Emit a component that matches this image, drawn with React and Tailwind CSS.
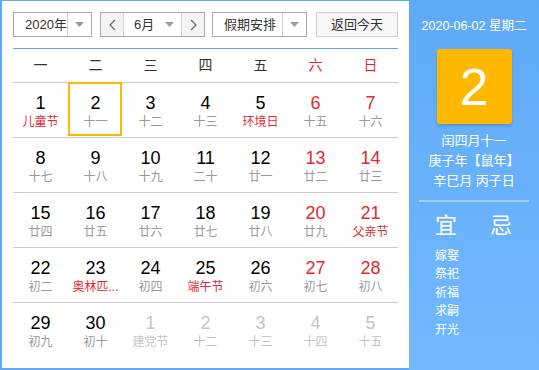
import React from "react";

const FONT = { fontFamily: '"Liberation Sans", "Noto Sans CJK SC", sans-serif' };

const Tri = () => (
  <svg width="9" height="5" viewBox="0 0 9 5"><path d="M0 0 H9 L4.5 5 Z" fill="#9a9a9a" /></svg>
);
const Chev = ({ dir }) => (
  <svg width="7" height="12" viewBox="0 0 7 12">
    <path d={dir === "l" ? "M6 1 L1 6 L6 11" : "M1 1 L6 6 L1 11"} fill="none" stroke="#666" strokeWidth="1.2" />
  </svg>
);

const rows = [
  [["1", "儿童节", "f"], ["2", "十一", "sel"], ["3", "十二"], ["4", "十三"], ["5", "环境日", "f"], ["6", "十五", "w"], ["7", "十六", "w"]],
  [["8", "十七"], ["9", "十八"], ["10", "十九"], ["11", "二十"], ["12", "廿一"], ["13", "廿二", "w"], ["14", "廿三", "w"]],
  [["15", "廿四"], ["16", "廿五"], ["17", "廿六"], ["18", "廿七"], ["19", "廿八"], ["20", "廿九", "w"], ["21", "父亲节", "wf"]],
  [["22", "初二"], ["23", "奥林匹...", "f"], ["24", "初四"], ["25", "端午节", "f"], ["26", "初六"], ["27", "初七", "w"], ["28", "初八", "w"]],
  [["29", "初九"], ["30", "初十"], ["1", "建党节", "o"], ["2", "十二", "o"], ["3", "十三", "o"], ["4", "十四", "o"], ["5", "十五", "o"]],
];

function Cell({ d }) {
  const [n, l, t = ""] = d;
  let nc = "text-black";
  let lc = "text-[#999]";
  if (t.includes("w")) nc = "text-[#e5282d]";
  if (t.includes("f")) lc = "text-[#e5282d]";
  if (t === "o") { nc = "text-[#c4c4c4]"; lc = "text-[#c4c4c4]"; }
  return (
    <div className="relative flex w-[55px] flex-col items-center pt-[10px]">
      {t === "sel" && (
        <div className="absolute left-0 top-[-1px] h-[54px] w-[54px] border-2 border-[#ffb800]" />
      )}
      <div className={`text-[18px] leading-[20px] ${nc}`}>{n}</div>
      <div className={`text-[12px] leading-[18px] whitespace-nowrap ${lc}`}>{l}</div>
    </div>
  );
}

export default function App() {
  const week = ["一", "二", "三", "四", "五", "六", "日"];
  return (
    <div style={FONT} className="flex h-[370px] w-[539px] bg-[#5fa9f7]">
      <div className="mb-[2px] ml-[2px] mt-px flex w-[407px] flex-col bg-white px-[11px] pt-[11px]">
        <div className="flex items-center border-b border-[#5ea9f6] pb-[11px] text-[13px] text-[#333]">
          <div className="flex h-[25px] w-[79px] border border-[#a9a9a9]">
            <div className="flex flex-1 items-center pl-[11px]">2020年</div>
            <div className="flex w-[24px] items-center justify-center border-l border-[#d2d2d2]"><Tri /></div>
          </div>
          <div className="ml-[8px] flex h-[25px] w-[105px] border border-[#a9a9a9]">
            <div className="flex w-[22px] items-center justify-center bg-[#f4f4f4]"><Chev dir="l" /></div>
            <div className="flex w-[59px] items-center border-x border-[#d2d2d2] pl-[10px]">
              <span className="flex-1">6月</span>
              <span className="mr-[7px] flex"><Tri /></span>
            </div>
            <div className="flex flex-1 items-center justify-center bg-[#f4f4f4]"><Chev dir="r" /></div>
          </div>
          <div className="ml-[7px] flex h-[25px] w-[95px] border border-[#a9a9a9]">
            <div className="flex flex-1 items-center pl-[11px]">假期安排</div>
            <div className="flex w-[24px] items-center justify-center border-l border-[#d2d2d2]"><Tri /></div>
          </div>
          <div className="ml-[9px] flex h-[25px] w-[82px] items-center justify-center border border-[#cfcfcf] bg-[#f7f7f7]">
            返回今天
          </div>
        </div>
        <div className="flex h-[34px] items-center border-b border-[#cccccc] text-[14px]">
          {week.map((w, i) => (
            <div key={w} className={`w-[55px] text-center ${i >= 5 ? "text-[#e5282d]" : "text-[#333]"}`}>{w}</div>
          ))}
        </div>
        {rows.map((r, i) => (
          <div key={i} className={`flex h-[55px] ${i < 4 ? "border-b border-[#cccccc]" : ""}`}>
            {r.map((d, j) => <Cell key={j} d={d} />)}
          </div>
        ))}
      </div>
      <div className="flex flex-1 flex-col bg-linear-to-b from-[#5eaaf7] to-[#72b8fd] pt-[16px] text-white">
        <div className="text-center text-[12.5px] leading-[20px] whitespace-nowrap">2020-06-02 星期二</div>
        <div className="mx-auto mt-[13px] flex h-[75px] w-[75px] items-center justify-center rounded-[3px] bg-[#ffb800] text-[52px] shadow-[0_2px_3px_rgba(0,0,0,0.15)]">
          2
        </div>
        <div className="mt-[7px] text-center text-[13px] leading-[20px]">
          <div>闰四月十一</div>
          <div className="whitespace-nowrap">庚子年【鼠年】</div>
          <div>辛巳月 丙子日</div>
        </div>
        <div className="mx-[10px] mt-[9px] h-[2px] bg-white/40" />
        <div className="mt-[9px] flex gap-[33px] pl-[26px] text-[22px] leading-[30px]">
          <span>宜</span>
          <span>忌</span>
        </div>
        <div className="mt-[6px] pl-[26px] text-[12px] leading-[18.4px]">
          <div>嫁娶</div>
          <div>祭祀</div>
          <div>祈福</div>
          <div>求嗣</div>
          <div>开光</div>
        </div>
      </div>
    </div>
  );
}
